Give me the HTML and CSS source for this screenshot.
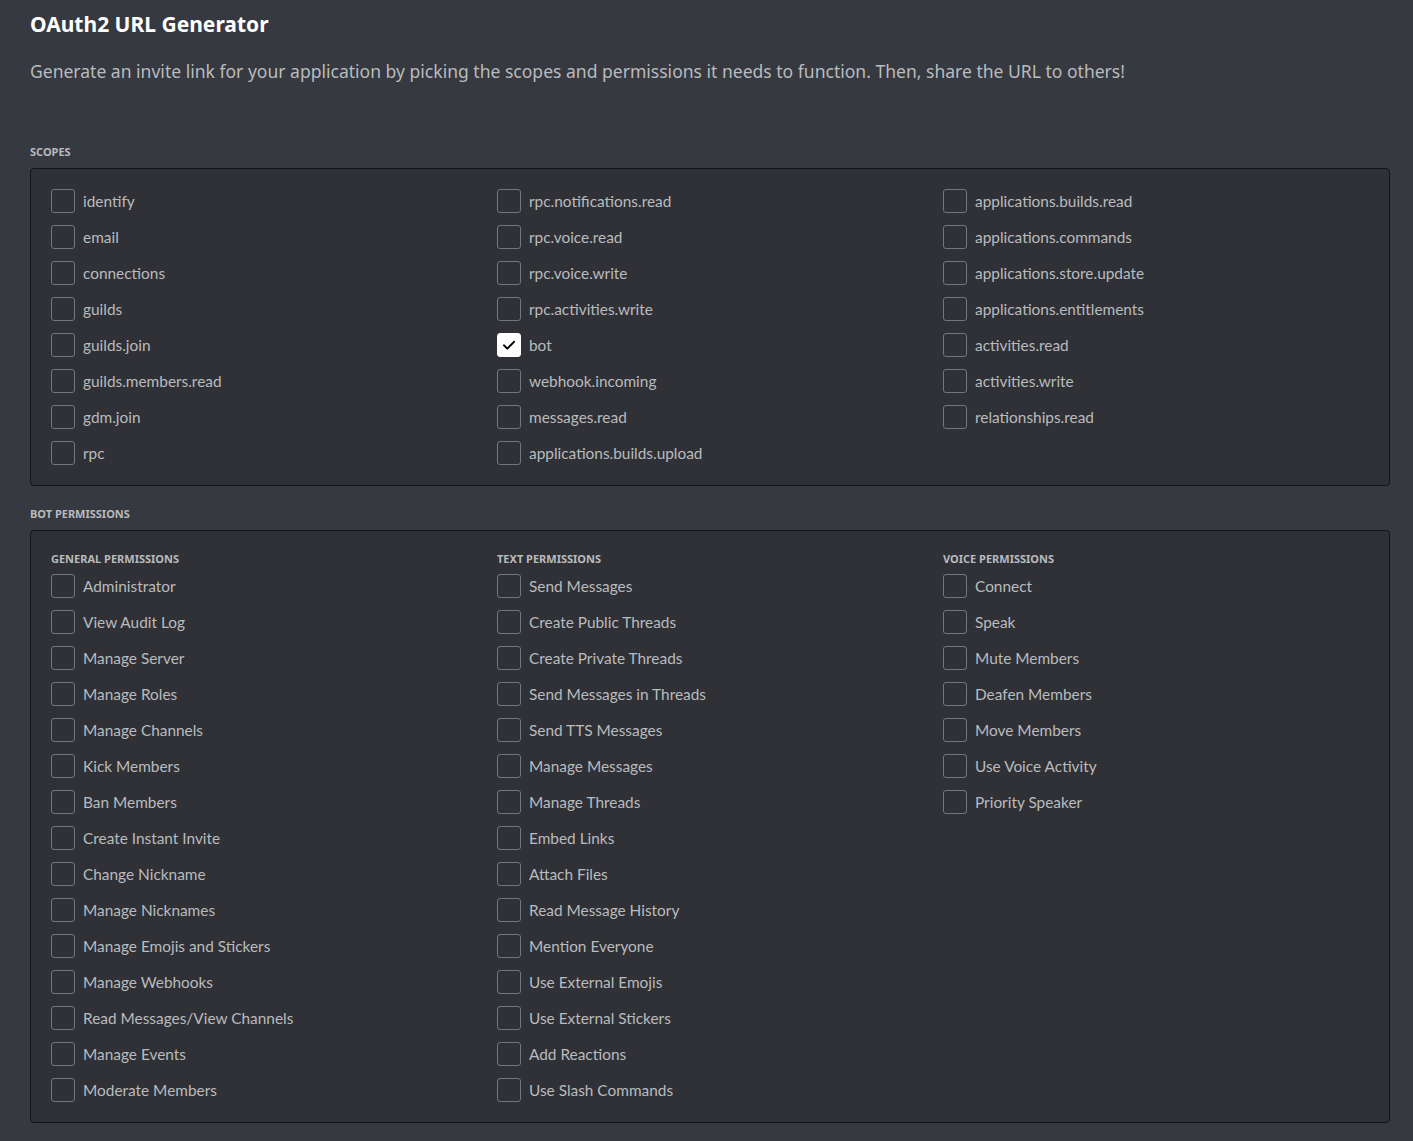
FILE: index.html
```html
<!DOCTYPE html>
<html>
<head>
<meta charset="utf-8">
<link rel="stylesheet" href="styles.css">
</head>
<body>
<div class="page">
  <h1 class="title">OAuth2 URL Generator</h1>
  <p class="desc">Generate an invite link for your application by picking the scopes and permissions it needs to function. Then, share the URL to others!</p>

  <h2 class="section-label scopes-label">Scopes</h2>
  <div class="panel">
    <div class="cols">
      <div class="col">
        <label class="item"><span class="box"></span><span class="text">identify</span></label>
        <label class="item"><span class="box"></span><span class="text">email</span></label>
        <label class="item"><span class="box"></span><span class="text">connections</span></label>
        <label class="item"><span class="box"></span><span class="text">guilds</span></label>
        <label class="item"><span class="box"></span><span class="text">guilds.join</span></label>
        <label class="item"><span class="box"></span><span class="text">guilds.members.read</span></label>
        <label class="item"><span class="box"></span><span class="text">gdm.join</span></label>
        <label class="item"><span class="box"></span><span class="text">rpc</span></label>
      </div>
      <div class="col">
        <label class="item"><span class="box"></span><span class="text">rpc.notifications.read</span></label>
        <label class="item"><span class="box"></span><span class="text">rpc.voice.read</span></label>
        <label class="item"><span class="box"></span><span class="text">rpc.voice.write</span></label>
        <label class="item"><span class="box"></span><span class="text">rpc.activities.write</span></label>
        <label class="item"><span class="box checked"><svg viewBox="0 0 24 24" width="20" height="20"><path d="M6 12.4 L10 16.4 L18 8.2" fill="none" stroke="#000" stroke-width="2.4" stroke-linecap="round" stroke-linejoin="round"/></svg></span><span class="text">bot</span></label>
        <label class="item"><span class="box"></span><span class="text">webhook.incoming</span></label>
        <label class="item"><span class="box"></span><span class="text">messages.read</span></label>
        <label class="item"><span class="box"></span><span class="text">applications.builds.upload</span></label>
      </div>
      <div class="col">
        <label class="item"><span class="box"></span><span class="text">applications.builds.read</span></label>
        <label class="item"><span class="box"></span><span class="text">applications.commands</span></label>
        <label class="item"><span class="box"></span><span class="text">applications.store.update</span></label>
        <label class="item"><span class="box"></span><span class="text">applications.entitlements</span></label>
        <label class="item"><span class="box"></span><span class="text">activities.read</span></label>
        <label class="item"><span class="box"></span><span class="text">activities.write</span></label>
        <label class="item"><span class="box"></span><span class="text">relationships.read</span></label>
      </div>
    </div>
  </div>

  <h2 class="section-label perms-label">Bot Permissions</h2>
  <div class="panel">
    <div class="cols">
      <div class="col">
        <h3 class="col-head">General Permissions</h3>
        <label class="item"><span class="box"></span><span class="text">Administrator</span></label>
        <label class="item"><span class="box"></span><span class="text">View Audit Log</span></label>
        <label class="item"><span class="box"></span><span class="text">Manage Server</span></label>
        <label class="item"><span class="box"></span><span class="text">Manage Roles</span></label>
        <label class="item"><span class="box"></span><span class="text">Manage Channels</span></label>
        <label class="item"><span class="box"></span><span class="text">Kick Members</span></label>
        <label class="item"><span class="box"></span><span class="text">Ban Members</span></label>
        <label class="item"><span class="box"></span><span class="text">Create Instant Invite</span></label>
        <label class="item"><span class="box"></span><span class="text">Change Nickname</span></label>
        <label class="item"><span class="box"></span><span class="text">Manage Nicknames</span></label>
        <label class="item"><span class="box"></span><span class="text">Manage Emojis and Stickers</span></label>
        <label class="item"><span class="box"></span><span class="text">Manage Webhooks</span></label>
        <label class="item"><span class="box"></span><span class="text">Read Messages/View Channels</span></label>
        <label class="item"><span class="box"></span><span class="text">Manage Events</span></label>
        <label class="item"><span class="box"></span><span class="text">Moderate Members</span></label>
      </div>
      <div class="col">
        <h3 class="col-head">Text Permissions</h3>
        <label class="item"><span class="box"></span><span class="text">Send Messages</span></label>
        <label class="item"><span class="box"></span><span class="text">Create Public Threads</span></label>
        <label class="item"><span class="box"></span><span class="text">Create Private Threads</span></label>
        <label class="item"><span class="box"></span><span class="text">Send Messages in Threads</span></label>
        <label class="item"><span class="box"></span><span class="text">Send TTS Messages</span></label>
        <label class="item"><span class="box"></span><span class="text">Manage Messages</span></label>
        <label class="item"><span class="box"></span><span class="text">Manage Threads</span></label>
        <label class="item"><span class="box"></span><span class="text">Embed Links</span></label>
        <label class="item"><span class="box"></span><span class="text">Attach Files</span></label>
        <label class="item"><span class="box"></span><span class="text">Read Message History</span></label>
        <label class="item"><span class="box"></span><span class="text">Mention Everyone</span></label>
        <label class="item"><span class="box"></span><span class="text">Use External Emojis</span></label>
        <label class="item"><span class="box"></span><span class="text">Use External Stickers</span></label>
        <label class="item"><span class="box"></span><span class="text">Add Reactions</span></label>
        <label class="item"><span class="box"></span><span class="text">Use Slash Commands</span></label>
      </div>
      <div class="col">
        <h3 class="col-head">Voice Permissions</h3>
        <label class="item"><span class="box"></span><span class="text">Connect</span></label>
        <label class="item"><span class="box"></span><span class="text">Speak</span></label>
        <label class="item"><span class="box"></span><span class="text">Mute Members</span></label>
        <label class="item"><span class="box"></span><span class="text">Deafen Members</span></label>
        <label class="item"><span class="box"></span><span class="text">Move Members</span></label>
        <label class="item"><span class="box"></span><span class="text">Use Voice Activity</span></label>
        <label class="item"><span class="box"></span><span class="text">Priority Speaker</span></label>
      </div>
    </div>
  </div>
</div>
</body>
</html>
```

FILE: styles.css
```css
* { box-sizing: border-box; }
html, body {
  margin: 0;
  padding: 0;
  background: #36393f;
}
body {
  font-family: "Noto Sans", "Open Sans", sans-serif;
  color: #b9bbbe;
}
.page {
  padding: 10px 23px 18px 30px;
}
.title {
  margin: 0;
  font-size: 21px;
  line-height: 28px;
  font-weight: 700;
  color: #ffffff;
}
.desc {
  margin: 22px 0 0 0;
  font-size: 17.55px;
  line-height: 22px;
  color: #b9bbbe;
}
.section-label {
  margin: 0;
  font-size: 11px;
  line-height: 16px;
  font-weight: 700;
  text-transform: uppercase;
  color: #b9bbbe;
  letter-spacing: 0;
}
.scopes-label { margin-top: 62px; margin-bottom: 8px; }
.perms-label { margin-top: 20px; margin-bottom: 8px; }
.panel {
  background: #2f3136;
  border: 1px solid #121315;
  border-radius: 4px;
  padding: 20px 20px 20px 20px;
}
.cols {
  display: grid;
  grid-template-columns: 446px 446px 1fr;
}
.col {
  display: flex;
  flex-direction: column;
  gap: 12px;
}
.col-head {
  margin: 0 0 -5px 0;
  font-size: 11px;
  line-height: 16px;
  font-weight: 700;
  text-transform: uppercase;
  color: #b9bbbe;
}
.item {
  display: flex;
  align-items: center;
  height: 24px;
}
.box {
  width: 24px;
  height: 24px;
  border: 1px solid #72767d;
  border-radius: 3px;
  flex: none;
  display: flex;
  align-items: center;
  justify-content: center;
}
.box.checked {
  background: #ffffff;
  border-color: #ffffff;
}
.text {
  margin-left: 8px;
  font-family: Lato, "Noto Sans", sans-serif;
  font-size: 15.4px;
  line-height: 20px;
  color: #b9bbbe;
}
```
